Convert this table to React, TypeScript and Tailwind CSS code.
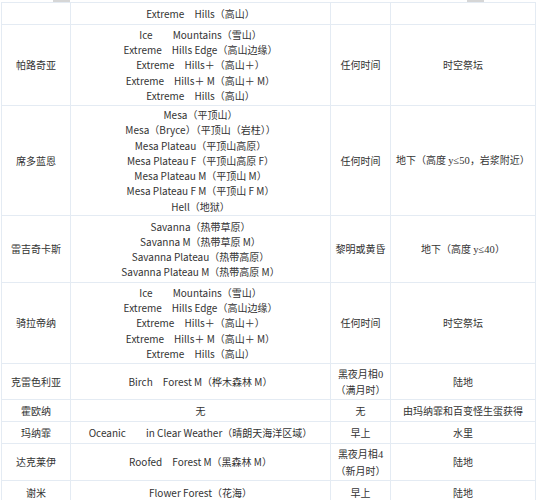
import React from "react";

type Part = string | number;
type Row = {
  name: string;
  biomes: Part[][];
  time: React.ReactNode;
  place: React.ReactNode;
  h: string;
};

const gapClass: Record<number, string> = {
  10: "inline-block w-[10px]",
  20: "inline-block w-[20px]",
};

const serif = (s: string) => <span className="font-['Liberation_Serif',serif] text-[10.5px]">{s}</span>;

const giratinaLines: Part[][] = [
  ["Ice", 20, "Mountains（雪山）"],
  ["Extreme", 10, "Hills Edge（高山边缘）"],
  ["Extreme", 10, "Hills＋（高山＋）"],
  ["Extreme", 10, "Hills＋ M（高山＋ M）"],
  ["Extreme", 10, "Hills（高山）"],
];

const rows: Row[] = [
  { name: "", biomes: [["Extreme", 10, "Hills（高山）"]], time: "", place: "", h: "h-[22px]" },
  { name: "帕路奇亚", biomes: giratinaLines, time: "任何时间", place: "时空祭坛", h: "h-[81px]" },
  {
    name: "席多蓝恩",
    biomes: [
      ["Mesa（平顶山）"],
      ["Mesa（Bryce）（平顶山（岩柱））"],
      ["Mesa Plateau（平顶山高原）"],
      ["Mesa Plateau F（平顶山高原 F）"],
      ["Mesa Plateau M（平顶山 M）"],
      ["Mesa Plateau F M（平顶山 F M）"],
      ["Hell（地狱）"],
    ],
    time: "任何时间",
    place: <>地下（高度 {serif("y≤50")}，岩浆附近）</>,
    h: "h-[110px]",
  },
  {
    name: "雷吉奇卡斯",
    biomes: [
      ["Savanna（热带草原）"],
      ["Savanna M（热带草原 M）"],
      ["Savanna Plateau（热带高原）"],
      ["Savanna Plateau M（热带高原 M）"],
    ],
    time: "黎明或黄昏",
    place: <>地下（高度 {serif("y≤40")}）</>,
    h: "h-[67px]",
  },
  { name: "骑拉帝纳", biomes: giratinaLines, time: "任何时间", place: "时空祭坛", h: "h-[81px]" },
  {
    name: "克雷色利亚",
    biomes: [["Birch", 10, "Forest M（桦木森林 M）"]],
    time: <>黑夜月相{serif("0")}<br />（满月时）</>,
    place: "陆地",
    h: "h-[36px]",
  },
  { name: "霍欧纳", biomes: [["无"]], time: "无", place: "由玛纳霏和百变怪生蛋获得", h: "h-[22px]" },
  {
    name: "玛纳霏",
    biomes: [["Oceanic", 20, "in Clear Weather（晴朗天海洋区域）"]],
    time: "早上",
    place: "水里",
    h: "h-[22px]",
  },
  {
    name: "达克莱伊",
    biomes: [["Roofed", 10, "Forest M（黑森林 M）"]],
    time: <>黑夜月相{serif("4")}<br />（新月时）</>,
    place: "陆地",
    h: "h-[37px]",
  },
  { name: "谢米", biomes: [["Flower Forest（花海）"]], time: "早上", place: "陆地", h: "h-[24px]" },
];

const cell = "border border-[#e4ebf3] text-center align-middle p-0";

export default function App() {
  return (
    <div className="relative w-[538px] h-[500px] overflow-hidden bg-white font-['Noto_Sans_CJK_SC',sans-serif] text-[10px] leading-[15.2px] text-[#333]">
      <div className="absolute left-[53px] top-0 w-[17px] h-[2px] bg-[#d6d6d6]" />
      <div className="absolute left-[467px] top-0 w-[17px] h-[2px] bg-[#d6d6d6]" />
      <table className="mt-[2px] ml-[1px] w-[534px] table-fixed border-collapse">
        <colgroup>
          <col className="w-[69px]" />
          <col className="w-[260px]" />
          <col className="w-[60px]" />
          <col className="w-[145px]" />
        </colgroup>
        <tbody>
          {rows.map((r, i) => (
            <tr key={i} className={r.h}>
              <td className={cell}>{r.name}</td>
              <td className={cell}>
                {r.biomes.map((line, j) => (
                  <div key={j} className="whitespace-nowrap">
                    {line.map((p, k) =>
                      typeof p === "number" ? <span key={k} className={gapClass[p]} /> : <span key={k}>{p}</span>
                    )}
                  </div>
                ))}
              </td>
              <td className={cell}>{r.time}</td>
              <td className={cell + " whitespace-nowrap"}>{r.place}</td>
            </tr>
          ))}
        </tbody>
      </table>
    </div>
  );
}
